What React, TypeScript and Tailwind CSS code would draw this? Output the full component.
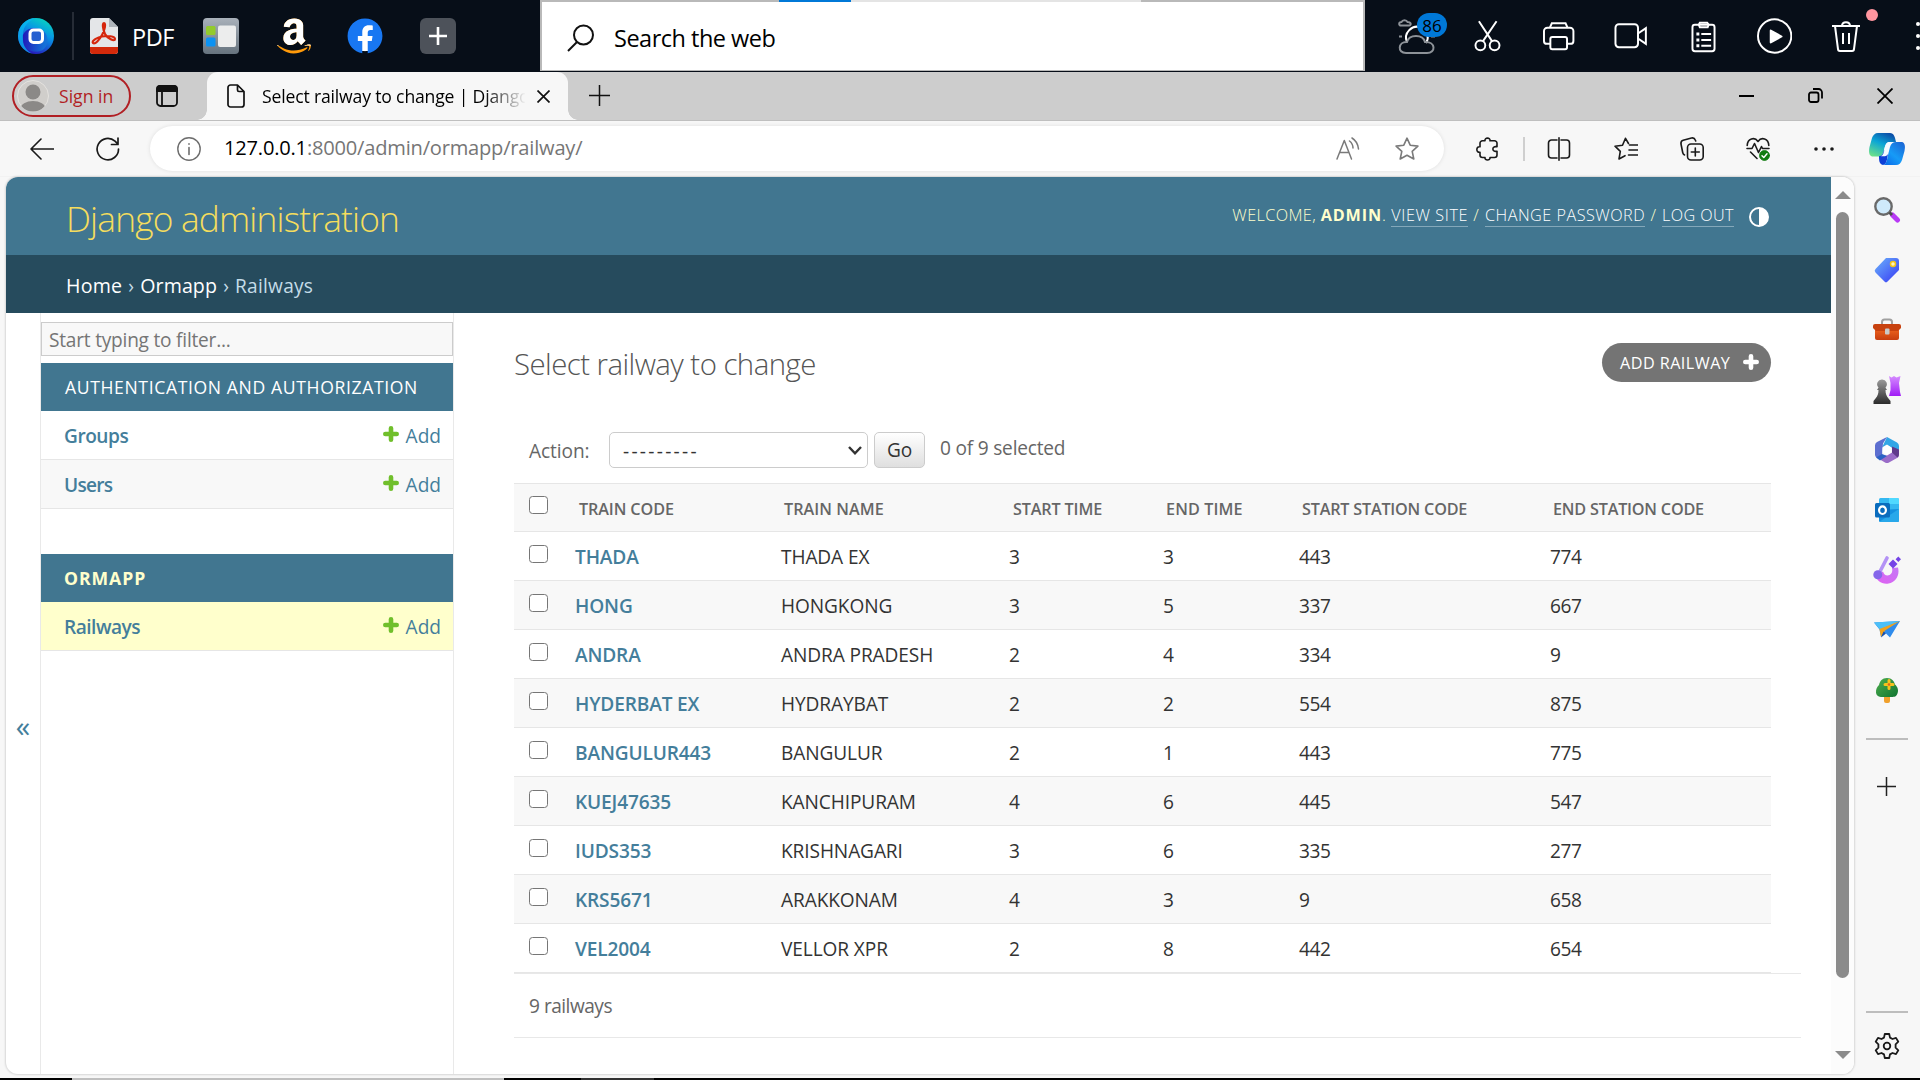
import type { ReactNode } from 'react';
import { FaAmazon, FaFacebook } from 'react-icons/fa';

type Train = { code: string; name: string; start: string; end: string; from: string; to: string };

const trains: Train[] = [
  { code: 'THADA', name: 'THADA EX', start: '3', end: '3', from: '443', to: '774' },
  { code: 'HONG', name: 'HONGKONG', start: '3', end: '5', from: '337', to: '667' },
  { code: 'ANDRA', name: 'ANDRA PRADESH', start: '2', end: '4', from: '334', to: '9' },
  { code: 'HYDERBAT EX', name: 'HYDRAYBAT', start: '2', end: '2', from: '554', to: '875' },
  { code: 'BANGULUR443', name: 'BANGULUR', start: '2', end: '1', from: '443', to: '775' },
  { code: 'KUEJ47635', name: 'KANCHIPURAM', start: '4', end: '6', from: '445', to: '547' },
  { code: 'IUDS353', name: 'KRISHNAGARI', start: '3', end: '6', from: '335', to: '277' },
  { code: 'KRS5671', name: 'ARAKKONAM', start: '4', end: '3', from: '9', to: '658' },
  { code: 'VEL2004', name: 'VELLOR XPR', start: '2', end: '8', from: '442', to: '654' },
];

/* ---------- launcher bar ---------- */

function LauncherBar() {
  return (
    <div className="flex h-[72px] shrink-0 bg-[#070e18] text-white">
      <div className="flex w-[540px] items-center pl-[18px]">
        <svg className="size-9" viewBox="0 0 36 36">
          <defs>
            <linearGradient id="oneA" x1="0.8" y1="0" x2="0.3" y2="1">
              <stop offset="0" stopColor="#08d9bd" />
              <stop offset="0.4" stopColor="#0795e6" />
              <stop offset="1" stopColor="#2a10b8" />
            </linearGradient>
            <linearGradient id="oneB" x1="0" y1="0" x2="1" y2="0.3">
              <stop offset="0" stopColor="#2300b0" />
              <stop offset="1" stopColor="#1573d8" />
            </linearGradient>
          </defs>
          <circle cx="18" cy="18" r="18" fill="url(#oneA)" />
          <path d="M5 17C8 10 17 8 24 12C31 16 31 26 26 31C19 36 8 33 6 27C4 24 4 20 5 17Z" fill="url(#oneB)" opacity="0.85" />
          <path d="M0 18A18 18 0 0 1 18 0C8 4 4 10 5 22C5 28 9 33 14 35.500A18 18 0 0 1 0 18Z" fill="#08b8f0" opacity="0.75" />
          <rect x="12" y="12" width="12.500" height="12.500" rx="3.500" fill="#2560d0" stroke="#fff" strokeWidth="3" />
        </svg>
        <div className="ml-[18px] h-12 w-[2px] bg-[#262c36]" />
        <svg className="ml-4 h-9 w-7" viewBox="0 0 28 36">
          <path d="M3 0H19L28 9V33A3 3 0 0 1 25 36H3A3 3 0 0 1 0 33V3A3 3 0 0 1 3 0Z" fill="#e4e6e8" />
          <path d="M19 0L28 9H19Z" fill="#aeb4ba" />
          <path d="M0 29H28V33A3 3 0 0 1 25 36H3A3 3 0 0 1 0 33Z" fill="#d42a0b" />
          <path d="M3 25C1 23 8 19 12 18.500C17 17.500 25 18 25 21C25 24.500 17 20 15 16C13 12 12 5 14 5C16 5 15 12 12 17C9.500 21.500 5 27 3 25Z" fill="none" stroke="#d6260c" strokeWidth="2.200" />
        </svg>
        <span className="ml-[14px] pt-[3px] text-[23.5px] tracking-[-0.5px]">PDF</span>
        <svg className="ml-[29px] size-9" viewBox="0 0 36 36">
          <defs>
            <linearGradient id="tile" x1="0" y1="0" x2="0" y2="1">
              <stop offset="0" stopColor="#a9b1ba" />
              <stop offset="1" stopColor="#66737e" />
            </linearGradient>
          </defs>
          <rect width="36" height="36" rx="4" fill="url(#tile)" />
          <rect x="3" y="8" width="9.500" height="9" rx="1.500" fill="#93cb2c" />
          <rect x="3" y="19.500" width="9.500" height="9" rx="1.500" fill="#0c92f2" />
          <rect x="15" y="7.500" width="18" height="21.500" rx="2" fill="#eceded" />
        </svg>
        <div className="relative ml-[35px] h-10 w-[38px]">
          <FaAmazon className="absolute inset-0 size-10 text-[#ff9a0a]" />
          <FaAmazon className="absolute inset-0 size-10 text-white [clip-path:inset(0_0_26%_0)]" />
        </div>
        <span className="ml-[35px] flex size-9 items-center justify-center rounded-full bg-[radial-gradient(white_60%,transparent_61%)]">
          <FaFacebook className="size-9 text-[#1877f2]" />
        </span>
        <div className="ml-[37px] flex size-9 items-center justify-center rounded-[6px] bg-[#4d525a]">
          <svg className="size-5" viewBox="0 0 20 20" stroke="#fff" strokeWidth="2.600">
            <path d="M10 1V19M1 10H19" />
          </svg>
        </div>
      </div>

      <div className="flex h-[71px] w-[825px] flex-col border-x-2 border-b border-[#b9b9b9] bg-white">
        <div className="flex h-[2px] shrink-0 bg-[#b9b9b9]">
          <div className="ml-[237px] w-[72px] bg-[#0078d7]" />
          <div className="w-[290px] bg-[#e4e4e4]" />
        </div>
        <div className="flex flex-1 items-center pl-[25px] text-black">
          <svg className="mt-[3px] size-7" viewBox="0 0 28 28" fill="none" stroke="#111" strokeWidth="2">
            <circle cx="16.500" cy="11" r="9.500" />
            <path d="M10 18L1 27" />
          </svg>
          <span className="ml-[19px] pt-[6px] text-[23.5px] tracking-[-0.5px]">Search the web</span>
        </div>
      </div>

      <div className="flex flex-1 items-center overflow-hidden pl-[33px]">
        <div className="relative h-9 w-[38px]">
          <svg className="h-9 w-[38px]" viewBox="0 0 38 36" fill="none" strokeWidth="2">
            <path d="M3 7.500C0.500 7.500 0.500 4 3.500 4C4.500 1.500 8.500 1.500 9.500 4C13.500 4 13.500 7.500 11 7.500Z" stroke="#8d9298" />
            <path d="M9 24C5 15 14 7 22 9M28 25C30 22 30 19 29.500 17" stroke="#fff" />
            <path d="M1 18.500H4M33 18.500H37" stroke="#8d9298" />
            <path d="M8 35C-1 35 0 23.500 9 24C11 16 25 16 27 24C38 23.500 38 35 29 35Z" stroke="#8d9298" />
          </svg>
          <span className="absolute left-[19px] top-[-5px] flex h-6 w-[30px] items-center justify-center rounded-full bg-[#0078d7] text-[17px] leading-none text-black">
            86
          </span>
        </div>
        <svg className="ml-[38px] h-8 w-7" viewBox="0 0 28 32" fill="none" stroke="#fff" strokeWidth="2">
          <circle cx="6.500" cy="25.500" r="5" />
          <circle cx="21" cy="25.500" r="5" />
          <path d="M5 1L18.500 21.500M23 1L9 21.500" />
        </svg>
        <svg className="ml-[42px] h-[30px] w-8" viewBox="0 0 32 30" fill="none" stroke="#fff" strokeWidth="2">
          <path d="M7 6.500L9 2H23L25 6.500" />
          <path d="M8 23H4A3 3 0 0 1 1 20V10A3.500 3.500 0 0 1 4.500 6.500H27.500A3.500 3.500 0 0 1 31 10V20A3 3 0 0 1 28 23H24" />
          <rect x="7.500" y="16" width="17" height="12.500" rx="2" />
        </svg>
        <svg className="ml-[39px] h-7 w-[34px]" viewBox="0 0 34 28" fill="none" stroke="#fff" strokeWidth="2">
          <rect x="1.500" y="2" width="23" height="23.500" rx="3.500" />
          <path d="M24.500 11.500L32.500 6V22L24.500 16.500Z" />
        </svg>
        <svg className="ml-[44px] mt-[2px] h-8 w-[26px]" viewBox="0 0 26 32" fill="none" stroke="#fff" strokeWidth="2">
          <rect x="1.500" y="3.500" width="22.500" height="27" rx="2.500" />
          <path d="M8 3.500L9 1.500H16.500L18 3.500L17 6H9Z" />
          <path d="M5.500 13H8.500M5.500 19H8.500M5.500 25H8.500" strokeWidth="3" />
          <path d="M10.500 13H20.500M10.500 19H20.500M10.500 25H20.500" />
        </svg>
        <svg className="ml-[40px] size-9" viewBox="0 0 36 36">
          <circle cx="18" cy="18" r="17" fill="none" stroke="#fff" strokeWidth="2" />
          <path d="M14 12.500L25 18.500L14 24.500Z" fill="#fff" stroke="#fff" strokeWidth="2" strokeLinejoin="round" />
        </svg>
        <div className="relative ml-[40px]">
          <svg className="h-8 w-7" viewBox="0 0 28 32" fill="none" stroke="#fff" strokeWidth="2">
            <path d="M0 6H28M10 6C10 1 18 1 18 6M3 6L6 29A2 2 0 0 0 8 31H20A2 2 0 0 0 22 29L25 6M11 13V24M17 13V24" />
          </svg>
          <span className="absolute left-[34px] top-[-11px] size-3 rounded-full bg-[#ff959f]" />
        </div>
        <div className="ml-[56px] flex shrink-0 flex-col gap-[8px]">
          <span className="size-1 rounded-full bg-white" />
          <span className="size-1 rounded-full bg-white" />
          <span className="size-1 rounded-full bg-white" />
        </div>
      </div>
    </div>
  );
}

/* ---------- browser tab strip and toolbar ---------- */

function TabStrip() {
  return (
    <div className="flex h-12 shrink-0 bg-[#cdcdcd]">
      <div className="flex w-[207px] items-center pl-3">
        <div className="flex h-[42px] w-[119px] items-center rounded-full border-2 border-[#b11f24] pl-[3px]">
          <svg className="size-8" viewBox="0 0 32 32">
            <clipPath id="avatar">
              <circle cx="16" cy="16" r="15.500" />
            </clipPath>
            <circle cx="16" cy="16" r="15.500" fill="#d0cecb" stroke="#e4e2df" />
            <g clipPath="url(#avatar)" fill="#8b8987">
              <circle cx="16" cy="12" r="7.500" />
              <ellipse cx="16" cy="29" rx="12.500" ry="8" />
            </g>
          </svg>
          <span className="ml-[10px] text-[17.6px] text-[#b11f24]">Sign in</span>
        </div>
        <svg className="ml-[25px] h-[22px] w-[22px]" viewBox="0 0 22 22" fill="none" stroke="#111" strokeWidth="1.800">
          <rect x="1" y="1" width="20" height="20" rx="3.500" />
          <path d="M6 6V21" />
          <path d="M1 3.500A2.500 2.500 0 0 1 3.500 1H18.500A2.500 2.500 0 0 1 21 3.500V6H1Z" fill="#111" />
        </svg>
      </div>
      <div className="relative flex w-[361px] items-center rounded-t-[11px] bg-[#f7f7f7] pl-[20px]">
        <span className="absolute bottom-0 left-[-10px] size-[10px] bg-[radial-gradient(circle_at_0_0,#cdcdcd_9.5px,#f7f7f7_10px)]" />
        <span className="absolute bottom-0 right-[-10px] size-[10px] bg-[radial-gradient(circle_at_100%_0,#cdcdcd_9.5px,#f7f7f7_10px)]" />
        <svg className="h-6 w-[18px]" viewBox="0 0 18 24" fill="none" stroke="#111" strokeWidth="1.700" strokeLinejoin="round">
          <path d="M3.500 1H10.500L17 7.500V20.500A2.500 2.500 0 0 1 14.500 23H3.500A2.500 2.500 0 0 1 1 20.500V3.500A2.500 2.500 0 0 1 3.500 1ZM10.500 1V6A1.500 1.500 0 0 0 12 7.500H17" />
        </svg>
        <span className="ml-[17px] w-[263px] whitespace-nowrap bg-[linear-gradient(90deg,black_222px,transparent_264px)] bg-clip-text text-[17.6px] tracking-[-0.17px] text-transparent">
          Select railway to change | Django
        </span>
        <svg className="ml-[12px] mt-px size-[13px]" viewBox="0 0 13 13" stroke="#111" strokeWidth="1.700">
          <path d="M0.500 0.500L12.500 12.500M12.500 0.500L0.500 12.500" />
        </svg>
      </div>
      <div className="flex flex-1 items-center pb-px pl-[21px] pr-[27px]">
        <svg className="size-[21px]" viewBox="0 0 21 21" stroke="#111" strokeWidth="1.500">
          <path d="M10.500 0V21M0 10.500H21" />
        </svg>
        <svg className="ml-auto h-4 w-[15px]" viewBox="0 0 15 16" stroke="#000" strokeWidth="2">
          <path d="M0 8H15" />
        </svg>
        <svg className="ml-[54px] size-[15px]" viewBox="0 0 15 15" fill="none" stroke="#000" strokeWidth="1.800">
          <rect x="1" y="4.500" width="9.500" height="9.500" rx="2" />
          <path d="M5 1H10.500A3.500 3.500 0 0 1 14 4.500V10.500" />
        </svg>
        <svg className="ml-[54px] size-4" viewBox="0 0 16 16" stroke="#000" strokeWidth="1.800">
          <path d="M0.500 0.500L15.500 15.500M15.500 0.500L0.500 15.500" />
        </svg>
      </div>
    </div>
  );
}

const STAR = 'M12 1.200L15.200 8.200L22.900 9.100L17.200 14.300L18.800 22L12 18.200L5.200 22L6.800 14.300L1.100 9.100L8.800 8.200Z';

function ToolIcon({ children, className, stroke = '#1a1a1a' }: { children: ReactNode; className: string; stroke?: string }) {
  return (
    <svg className={`size-6 shrink-0 ${className}`} viewBox="0 0 24 24" fill="none" stroke={stroke} strokeWidth="1.600" strokeLinejoin="round" strokeLinecap="round">
      {children}
    </svg>
  );
}

function Toolbar() {
  return (
    <div className="flex h-[57px] shrink-0 items-center border-b border-t border-b-[#f2f2f2] border-t-[#bfbfbf] bg-[#f7f7f7] pl-[30px]">
      <ToolIcon className="">
        <path d="M23.500 12H1M11 2L1 12L11 22" />
      </ToolIcon>
      <ToolIcon className="ml-[42px]">
        <path d="M22.500 12A10.700 10.700 0 1 1 19 4.200L22 7.200M22 1V7.500H15.500" strokeWidth="1.700" />
      </ToolIcon>
      <div className="ml-[30px] flex h-[45px] w-[1294px] items-center rounded-full bg-white pl-[27px] pr-[25px] shadow-[0_0_4px_rgba(0,0,0,0.1)]">
        <ToolIcon className="" stroke="#6e6e6e">
          <circle cx="12" cy="12" r="11.200" strokeWidth="1.400" />
          <path d="M12 10.500V17.500M12 6.800V7.200" />
        </ToolIcon>
        <span className="ml-[23px] text-[20.1px] tracking-[-0.21px] text-[#767676]">
          <span className="text-black">127.0.0.1</span>:8000/admin/ormapp/railway/
        </span>
        <ToolIcon className="ml-auto" stroke="#7a7a7a">
          <path d="M1 22L8.300 3.500L15.500 22M3.500 15.500H13" strokeWidth="1.500" />
          <path d="M13.500 4C16 6 17 8 17 11M16 1C20 3.500 22 7 22.500 12" strokeWidth="1.500" />
        </ToolIcon>
        <ToolIcon className="ml-[35px]" stroke="#7a7a7a">
          <path d={STAR} />
        </ToolIcon>
      </div>
      <ToolIcon className="ml-[31px]">
        <path d="M7.500 3.800H10C9.300 0.200 15.700 0.200 15 3.800H19.500A2.500 2.500 0 0 1 22 6.300V9.800C16.500 8.500 16.500 15.500 22 14.200V18A2.500 2.500 0 0 1 19.500 20.500H15C15.700 23.800 9.300 23.800 10 20.500H7.500A2.500 2.500 0 0 1 5 18V15.200C0.800 16.200 0.800 8.800 5 9.800V6.300A2.500 2.500 0 0 1 7.500 3.800Z" />
      </ToolIcon>
      <div className="ml-[24px] h-6 w-[2px] bg-[#cfcfcf]" />
      <ToolIcon className="ml-[22px]">
        <path d="M8 3H4.500A3 3 0 0 0 1.500 6V18A3 3 0 0 0 4.500 21H8M12 0.800V23.200M16 3H19.500A3 3 0 0 1 22.500 6V18A3 3 0 0 1 19.500 21H16M8 3H10M8 21H10M14 3H16M14 21H16" />
      </ToolIcon>
      <ToolIcon className="ml-[43px]">
        <path d="M14.500 6.500L11.500 1.300L8.500 8.300L1 9.200L6.300 14.300L5 22L11 18.700M15.500 8H23.500M15 13H23.500M14.500 18H23.500" />
      </ToolIcon>
      <ToolIcon className="ml-[42px]">
        <rect x="7.500" y="7" width="15.700" height="16" rx="3.500" />
        <path d="M15.300 11V19M11.300 15H19.300M4.500 18C3.500 17.500 3 17 2.700 15.500L1 7C0.700 5 1.500 3.700 3.200 3.200L11.500 1C13.500 0.600 14.700 1.300 15.300 3L15.700 4" />
      </ToolIcon>
      <ToolIcon className="ml-[42px]">
        <path d="M1.200 8.500C1.500 1.500 8.500 -0.500 12 4.500C15.500 -0.500 22.500 1.500 22.800 8.500M1 11.500H6L8.500 6.500L12.500 15.500L15.500 9.500L16.500 11.500H23M4.500 15L11 21.500" />
        <circle cx="18.500" cy="18.500" r="5" fill="#107c10" stroke="#107c10" strokeWidth="0.800" />
        <path d="M16 18.700L17.800 20.500L21 16.800" stroke="#fff" strokeWidth="1.400" />
      </ToolIcon>
      <svg className="ml-[42px] h-6 w-6" viewBox="0 0 24 24" fill="#1a1a1a">
        <circle cx="4" cy="12" r="1.800" />
        <circle cx="12" cy="12" r="1.800" />
        <circle cx="20" cy="12" r="1.800" />
      </svg>
      <svg className="ml-[33px] h-8 w-9" viewBox="0 0 36 32">
        <defs>
          <linearGradient id="copA" x1="0.7" y1="0" x2="0.2" y2="1">
            <stop offset="0" stopColor="#0c4fa8" />
            <stop offset="0.450" stopColor="#0aa5d6" />
            <stop offset="1" stopColor="#6be08a" />
          </linearGradient>
          <linearGradient id="copB" x1="1" y1="0" x2="0.2" y2="1">
            <stop offset="0" stopColor="#1c62d2" />
            <stop offset="0.600" stopColor="#169bf7" />
            <stop offset="1" stopColor="#0b6fea" />
          </linearGradient>
        </defs>
        <path d="M9 0H21C25 0 26 4 27 9H20C17 9 16 13 15 17C14 21 13 23.500 10 23.500H4C0 23.500 -0.500 19 0.500 14L3 5C4 2 6 0 9 0Z" fill="url(#copA)" />
        <path d="M10 23C13 23 14 21 15 17L19 21C18 26 18 31 14 32C10 31 10 27 10 23Z" fill="#0d3fd6" />
        <path d="M15.500 16C16.500 11.500 17.500 9 21 9H25C22.500 10 21.500 12 21 14L19.500 20C19 21.500 18 23 16 23.200H12C14.500 22 15 19 15.500 16Z" fill="#f4fbff" />
        <path d="M27 9H32C36 9 36.500 13 35.500 18L33 27C32 30 30 32 27 32H14C18 31 18 26 19.500 20L21 14C22 10.500 24 9 27 9Z" fill="url(#copB)" />
      </svg>
    </div>
  );
}

/* ---------- Django admin page ---------- */

function PlusIcon({ color }: { color: string }) {
  return (
    <svg className="size-4" viewBox="0 0 16 16" stroke={color} strokeWidth="4.600" strokeLinecap="round">
      <path d="M8 2.300V13.700M2.300 8H13.700" />
    </svg>
  );
}

function Header() {
  return (
    <>
      <div className="flex h-[78px] shrink-0 items-center justify-between bg-[#417690] pl-[60px] pr-[62px]">
        <h1 className="pt-[5px] text-[35.3px] font-light leading-none tracking-[-0.82px] text-[#f5dd5d]">Django administration</h1>
        <div className="flex items-center text-[16.2px] font-light text-[#ffc]">
          <div className="whitespace-pre pb-[3px] leading-[24px]">
            <span className="tracking-[0.4px]">WELCOME, </span>
            <strong className="font-bold tracking-[0.9px]">ADMIN</strong>
            <span className="tracking-[0.6px]">. </span>
            <a className="inline-block border-b border-[#84a8ba] leading-[22px] tracking-[0.6px] text-white">VIEW SITE</a>
            <span className="tracking-[1px]"> / </span>
            <a className="inline-block border-b border-[#84a8ba] leading-[22px] tracking-[0.5px] text-white">CHANGE PASSWORD</a>
            <span className="tracking-[1px]"> / </span>
            <a className="inline-block border-b border-[#84a8ba] leading-[22px] tracking-[0.4px] text-white">LOG OUT</a>
          </div>
          <svg className="ml-[15px] mt-[2px] size-5" viewBox="0 0 20 20">
            <circle cx="10" cy="10" r="9" fill="none" stroke="#fff" strokeWidth="2" />
            <path d="M10 1A9 9 0 0 1 10 19Z" fill="#fff" />
          </svg>
        </div>
      </div>
      <nav className="flex h-[58px] shrink-0 items-center whitespace-pre bg-[#264b5d] pl-[60px] pt-[4px] text-[19.1px] text-[#c4dce8]">
        <span className="text-[19.6px] font-medium tracking-[0.2px] text-white">Home</span>
        <span className="w-[18px] text-center">›</span>
        <span className="text-[19.6px] font-medium tracking-[0.1px] text-white">Ormapp</span>
        <span className="w-[18px] text-center">›</span>
        <span className="tracking-[0.25px]">Railways</span>
      </nav>
    </>
  );
}

function SidebarRow({ label, shade, className }: { label: string; shade: string; className: string }) {
  return (
    <div className={`flex h-[49px] items-center justify-between border-b border-[#e6e6e6] pl-[23px] pr-[12px] pt-[3px] text-[#447e9b] ${shade}`}>
      <span className={`text-[19.1px] font-semibold ${className}`}>{label}</span>
      <span className="flex items-center gap-[7px] text-[19.1px]">
        <span className="pb-[5px]">
          <PlusIcon color="#70bf2b" />
        </span>
        Add
      </span>
    </div>
  );
}

function Sidebar() {
  return (
    <div className="flex shrink-0">
      <div className="flex w-[34px] flex-col items-center pt-[397px] text-[29px] leading-[32px] text-[#447e9b]">«</div>
      <aside className="w-[414px] border-x border-[#e9e9e9] pt-[9px]">
        <div className="flex h-[34px] items-center border border-[#ccc] bg-[#f8f8f8] pl-[7px] pt-[2px] text-[19.1px] tracking-[-0.22px] text-[#757575]">
          Start typing to filter...
        </div>
        <div className="mt-[7px] flex h-12 items-center bg-[#417690] pl-6 text-[17.6px] tracking-[0.62px] text-white">
          AUTHENTICATION AND AUTHORIZATION
        </div>
        <SidebarRow label="Groups" shade="bg-white" className="tracking-[-0.46px]" />
        <SidebarRow label="Users" shade="bg-[#f8f8f8]" className="tracking-[-0.75px]" />
        <div className="mt-[45px] flex h-12 items-center bg-[#417690] pl-[23px] text-[17.6px] font-bold tracking-[0.95px] text-[#ffc]">ORMAPP</div>
        <SidebarRow label="Railways" shade="bg-[#ffc]" className="tracking-[-0.5px]" />
      </aside>
    </div>
  );
}

function Checkbox() {
  return <span className="mb-[4px] ml-[15px] block h-[18px] w-[19px] rounded-[3.5px] border-[1.5px] border-[#767676] bg-white" />;
}

function ResultTable() {
  return (
    <table className="w-[1257px] table-fixed border-collapse text-left text-[19.1px] text-[#333]">
      <colgroup>
        <col className="w-[62px]" />
        <col className="w-[205px]" />
        <col className="w-[228px]" />
        <col className="w-[154px]" />
        <col className="w-[135px]" />
        <col className="w-[251px]" />
        <col />
      </colgroup>
      <thead>
        <tr className="h-[48px] border-y border-[#e6e6e6] bg-[#f8f8f8] text-[16.2px] text-[#666]">
          <th className="p-0 pb-[2px]">
            <Checkbox />
          </th>
          <th className="p-0 pl-[3px] pt-[3px] font-semibold tracking-[-0.11px]">TRAIN CODE</th>
          <th className="p-0 pl-[3px] pt-[3px] font-semibold tracking-[0.05px]">TRAIN NAME</th>
          <th className="p-0 pl-[4px] pt-[3px] font-semibold tracking-[-0.14px]">START TIME</th>
          <th className="p-0 pl-[3px] pt-[3px] font-semibold tracking-[0.1px]">END TIME</th>
          <th className="p-0 pl-[4px] pt-[3px] font-semibold tracking-[-0.2px]">START STATION CODE</th>
          <th className="p-0 pl-[4px] pt-[3px] font-semibold tracking-[-0.2px]">END STATION CODE</th>
        </tr>
      </thead>
      <tbody>
        {trains.map((t) => (
          <tr key={t.code} className="h-[49px] border-b border-[#e6e6e6] bg-white even:bg-[#f8f8f8]">
            <td className="p-0">
              <Checkbox />
            </td>
            <td className="p-0 pt-[2px] font-semibold tracking-[-0.15px] text-[#447e9b]">
              <span className="-ml-px">{t.code}</span>
            </td>
            <td className="p-0 pt-[2px] tracking-[-0.1px]">{t.name}</td>
            <td className="p-0 pt-[2px]">{t.start}</td>
            <td className="p-0 pt-[2px]">{t.end}</td>
            <td className="p-0 pl-px pt-[2px] tracking-[-0.43px]">{t.from}</td>
            <td className="p-0 pl-px pt-[2px] tracking-[-0.43px]">{t.to}</td>
          </tr>
        ))}
      </tbody>
    </table>
  );
}

function ChangeList() {
  return (
    <main className="flex flex-1 flex-col pl-[60px] pt-[30px]">
      <div className="flex h-[39px] items-center justify-between pr-[60px]">
        <h2 className="pt-[5px] text-[29.4px] font-light leading-none tracking-[-0.55px] text-[#555]">Select railway to change</h2>
        <div className="flex h-[39px] items-center rounded-[20px] bg-[#747474] pl-[18px] pr-[12px] text-white">
          <span className="w-[123px] pt-px text-[16.2px] tracking-[0.45px]">ADD RAILWAY</span>
          <span className="pb-[2px]">
            <PlusIcon color="#fff" />
          </span>
        </div>
      </div>
      <div className="mt-[50px] flex h-[36px] items-center pl-[15px] text-[19.1px] text-[#666]">
        <span className="w-[80px] pt-[2px] tracking-[-0.08px]">Action:</span>
        <div className="flex h-[36px] w-[259px] items-center justify-between rounded-[5px] border-[1.5px] border-[#ccc] bg-white pl-[13px] pr-[5px] text-[#333]">
          <span className="pt-[2px] tracking-[2.29px]">---------</span>
          <svg className="h-[9px] w-[14px]" viewBox="0 0 14 9" fill="none" stroke="#333" strokeWidth="2.400">
            <path d="M1 1L7 7.300L13 1" />
          </svg>
        </div>
        <div className="ml-[6px] flex h-[36px] w-[51px] items-center justify-center rounded-[5px] border-[1.5px] border-[#ccc] bg-linear-to-b from-white to-[#dfdfdf] pt-px tracking-[-0.2px] text-[#333]">
          Go
        </div>
        <span className="ml-[15px] pb-[4px] tracking-[-0.2px]">0 of 9 selected</span>
      </div>
      <div className="mt-[15px]">
        <ResultTable />
      </div>
      <div className="flex h-[65px] w-[1287px] items-center border-y border-[#e8e8e8] pl-[15px] pt-px text-[19.1px] tracking-[-0.5px] text-[#666]">
        9 railways
      </div>
    </main>
  );
}

function ScrollBar() {
  return (
    <div className="flex w-[23px] shrink-0 flex-col items-center bg-[#fcfcfc] pt-[14px]">
      <svg className="h-2 w-4" viewBox="0 0 16 8">
        <path d="M0 8L8 0L16 8Z" fill="#8b8b8b" />
      </svg>
      <div className="mt-[13px] h-[766px] w-[13px] rounded-full bg-[#8b8b8b]" />
      <svg className="mt-[73px] h-2 w-4" viewBox="0 0 16 8">
        <path d="M0 0H16L8 8Z" fill="#8b8b8b" />
      </svg>
    </div>
  );
}

/* ---------- browser side rail ---------- */

function RailIcon({ children }: { children: ReactNode }) {
  return (
    <div className="flex h-[60px] shrink-0 items-center">
      <svg className="size-7" viewBox="0 0 28 28">
        {children}
      </svg>
    </div>
  );
}

function SideRail() {
  return (
    <div className="flex flex-1 flex-col items-center pr-px pt-[3px]">
      <svg className="size-0" viewBox="0 0 1 1">
        <defs>
          <linearGradient id="blueTag" x1="0" y1="0" x2="1" y2="1">
            <stop offset="0" stopColor="#6cb4fb" />
            <stop offset="1" stopColor="#3638f4" />
          </linearGradient>
          <linearGradient id="orange" x1="0" y1="0" x2="0" y2="1">
            <stop offset="0" stopColor="#f0661f" />
            <stop offset="1" stopColor="#c73d0e" />
          </linearGradient>
          <linearGradient id="pawn" x1="0" y1="0" x2="0" y2="1">
            <stop offset="0" stopColor="#9a9a9a" />
            <stop offset="1" stopColor="#2c2c2c" />
          </linearGradient>
          <linearGradient id="rook" x1="0" y1="0" x2="0" y2="1">
            <stop offset="0" stopColor="#d58cff" />
            <stop offset="1" stopColor="#a01cf6" />
          </linearGradient>
          <linearGradient id="leaf" x1="0" y1="0" x2="1" y2="1">
            <stop offset="0" stopColor="#4fae4e" />
            <stop offset="1" stopColor="#0f7431" />
          </linearGradient>
          <linearGradient id="mag" x1="0" y1="1" x2="1" y2="0">
            <stop offset="0" stopColor="#e060f2" />
            <stop offset="1" stopColor="#c478f5" />
          </linearGradient>
        </defs>
      </svg>
      <RailIcon>
        <path d="M19.500 19L24.500 24" stroke="#b83af5" strokeWidth="5" strokeLinecap="round" />
        <circle cx="10.500" cy="10.500" r="8.200" fill="#cfeafb" stroke="#696969" strokeWidth="2.400" />
        <path d="M16.500 16.500L19 19" stroke="#4d4d4d" strokeWidth="3" />
      </RailIcon>
      <RailIcon>
        <path d="M13 2H23A3 3 0 0 1 26 5V14L14.500 25.500A2 2 0 0 1 11.500 25.500L2.500 16.500A2.500 2.500 0 0 1 2.500 13Z" fill="url(#blueTag)" />
        <circle cx="20" cy="8" r="2.500" fill="#fff3c4" stroke="#f5c518" strokeWidth="1.500" />
      </RailIcon>
      <RailIcon>
        <path d="M9 8V6A2.500 2.500 0 0 1 11.500 3.500H16.500A2.500 2.500 0 0 1 19 6V8" fill="none" stroke="#a0a0a0" strokeWidth="2" />
        <path d="M2 12H26V22A2 2 0 0 1 24 24H4A2 2 0 0 1 2 22Z" fill="url(#orange)" />
        <path d="M2 8H26A2 2 0 0 1 28 10V12L25 15H3L0 12V10A2 2 0 0 1 2 8Z" fill="#c8420f" />
        <rect x="12" y="12.500" width="4.500" height="6" rx="1" fill="#c9c9c9" />
      </RailIcon>
      <RailIcon>
        <path d="M16 0L18.500 1.500L21 0L23.500 1.500L27.500 0L26 7L27 16L28 20H16L17.500 14V7Z" fill="url(#rook)" />
        <path d="M9 3.500A4.700 4.700 0 0 1 12.500 11.500L14 14H12.500C12.500 18 13.500 20 15.500 22.500L17.500 25V28H0.500V25L2.500 22.500C4.500 20 5.500 18 5.500 14H4L5.500 11.500A4.700 4.700 0 0 1 9 3.500Z" fill="url(#pawn)" />
      </RailIcon>
      <RailIcon>
        <path d="M14 1L24 6.500A4 4 0 0 1 26 10V14L19 12L14 8.500L9 11.500Z" fill="#32a6e6" />
        <path d="M14 1L10 7.500L9 19.500L3.500 21.500A4 4 0 0 1 2 19V9.500A4 4 0 0 1 4 6Z" fill="#5d6fd0" />
        <path d="M3.500 21.500L9 19.500L14 19.500L19 16.500L19 12L26 14V18.500A4 4 0 0 1 24 22L16 26.500A4 4 0 0 1 12 26.500Z" fill="#9a6cc8" />
        <path d="M19 10.500L26 13.500V18A4 4 0 0 1 24.500 21.500L19 16.500Z" fill="#603a8c" />
        <path d="M9 18L14 20L7 24.500L3 21.500Z" fill="#2c62c4" />
        <path d="M14 9L18.500 11.500V16.500L14 19L9.500 16.500V11.500Z" fill="#fff" />
      </RailIcon>
      <RailIcon>
        <rect x="6" y="2" width="20" height="12" rx="1.500" fill="#35b8f1" />
        <path d="M16 2H24.500A1.500 1.500 0 0 1 26 3.500V8H16Z" fill="#50d9ff" />
        <path d="M6 14L26 13V24.500A1.500 1.500 0 0 1 24.500 26H7.500A1.500 1.500 0 0 1 6 24.500Z" fill="#1490df" />
        <path d="M6 26L26 13V24.500A1.500 1.500 0 0 1 24.500 26Z" fill="#28a8ea" />
        <rect x="2" y="7" width="15" height="14.500" rx="1.500" fill="#0a6cbd" />
        <ellipse cx="9.500" cy="14.200" rx="3.400" ry="3.800" fill="none" stroke="#fff" strokeWidth="2.200" />
      </RailIcon>
      <RailIcon>
        <path d="M3 19C3 25 9 28.500 15.500 27.500C23 26.500 27 19 25 11.500L19 12C20 16 18.500 19 14.500 19.500C12 19.500 11 18 10 15.500Z" fill="url(#mag)" />
        <path d="M14 2L7 15.500" stroke="#b392f5" strokeWidth="3.600" strokeLinecap="round" />
        <circle cx="4.800" cy="18.800" r="4.500" fill="#8566ea" />
        <path d="M20 3.500L24.500 8L20 12.500L15.500 8Z" fill="#7443e6" />
        <path d="M25.300 0.500L28 3.200L25.300 5.900L22.600 3.200Z" fill="#7443e6" />
      </RailIcon>
      <RailIcon>
        <path d="M1 6.500L27 5L17 21.500L12.500 17L8 21L6.500 13.500Z" fill="#2f8cec" />
        <path d="M1 6.500L27 5L7 13.500Z" fill="#4cc0f7" />
        <path d="M27 5L6.500 13L8 21L12 14.500Z" fill="#f3a21b" />
        <path d="M8 21.500L10.500 15.500L13 17.500Z" fill="#174fae" />
      </RailIcon>
      <RailIcon>
        <path d="M11 18H17V25A2 2 0 0 1 15 27H13A2 2 0 0 1 11 25Z" fill="#f0a02c" />
        <path d="M14 2C19 2 21 5 22 8.500C25 11 26 15 24 18.500C23 21 20 21 18 21H9C6 21 3.500 20 3 16.500C2.800 13 4 11 6 9C7 5 9 2 14 2Z" fill="url(#leaf)" />
        <path d="M16 4.500V12.500M12 8.500H20" stroke="#f6c21c" strokeWidth="3" strokeLinecap="round" />
        <circle cx="16" cy="8.500" r="1.300" fill="#e0641a" />
      </RailIcon>
      <div className="mt-[18px] h-[2px] w-[42px] bg-[#bdbdbd]" />
      <svg className="mt-[37px] size-[19px]" viewBox="0 0 19 19" stroke="#222" strokeWidth="1.500">
        <path d="M9.500 0V19M0 9.500H19" />
      </svg>
      <div className="mt-[215px] h-[2px] w-[42px] bg-[#bdbdbd]" />
      <svg className="mt-[20px] size-[26px]" viewBox="0 0 26 26" fill="none" stroke="#1a1a1a" strokeWidth="1.800" strokeLinejoin="round">
        <path d="M10.800 1H15.200L16 4.600L18.500 6L22 4.900L24.300 8.700L21.600 11.300V14.700L24.300 17.300L22 21.100L18.500 20L16 21.400L15.200 25H10.800L10 21.400L7.500 20L4 21.100L1.700 17.300L4.400 14.700V11.300L1.700 8.700L4 4.900L7.500 6L10 4.600Z" />
        <circle cx="13" cy="13" r="3.300" />
      </svg>
    </div>
  );
}

export default function App() {
  return (
    <div className="flex h-[1080px] w-[1920px] flex-col overflow-hidden bg-[#f7f7f7] font-['Open_Sans','Noto_Sans',sans-serif]">
      <LauncherBar />
      <TabStrip />
      <Toolbar />
      <div className="flex h-[901px] shrink-0">
        <div className="ml-[6px] flex h-[897px] w-[1848px] overflow-hidden rounded-[12px] bg-white shadow-[0_0_2px_1px_rgba(0,0,0,0.13)]">
          <div className="flex flex-1 flex-col">
            <Header />
            <div className="flex flex-1">
              <Sidebar />
              <ChangeList />
            </div>
          </div>
          <ScrollBar />
        </div>
        <SideRail />
      </div>
      <div className="flex h-[2px] shrink-0 bg-black">
        <div className="ml-[72px] w-[432px] bg-[#bfbfbf]" />
        <div className="ml-[77px] w-[73px] bg-[#333]" />
      </div>
    </div>
  );
}
